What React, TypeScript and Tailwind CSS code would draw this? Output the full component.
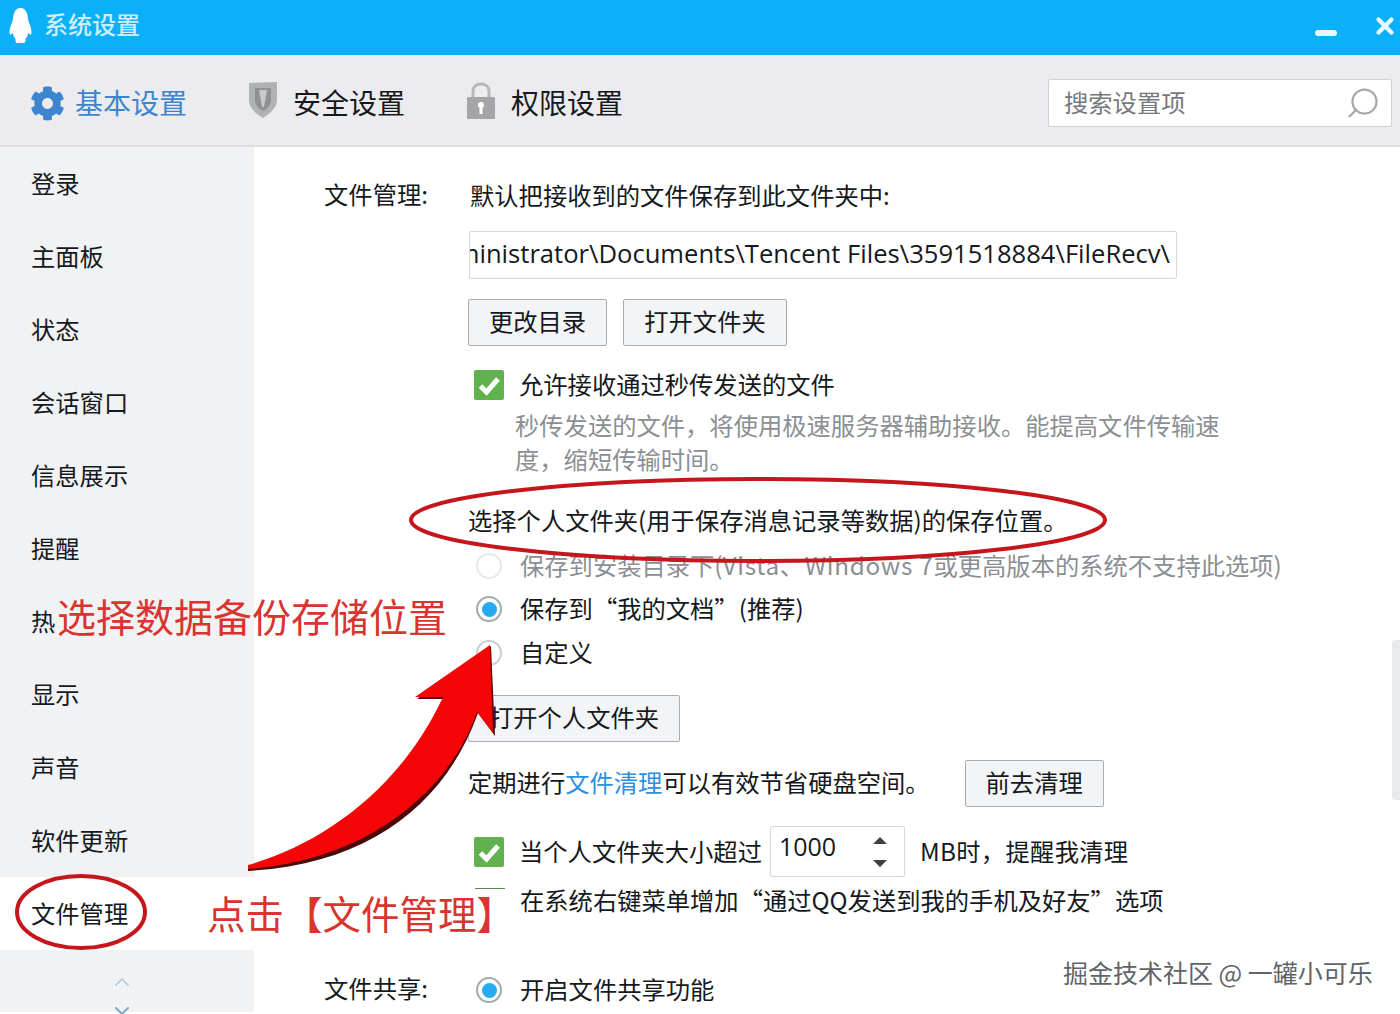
import { FaCog } from "react-icons/fa";
import { Search, ChevronUp, ChevronDown, X } from "lucide-react";

const cjk = { fontFamily: '"Noto Sans CJK SC", "Noto Sans", sans-serif' };

const sideItems = ["登录", "主面板", "状态", "会话窗口", "信息展示", "提醒", "热", "显示", "声音", "软件更新", "文件管理"];

function Row({ label, className, children }: { label?: string; className?: string; children: React.ReactNode }) {
  return (
    <div className={`flex items-center ${className ?? ""}`}>
      <div className="w-[174px] mr-[40px] shrink-0 text-right mb-[4px]">{label}</div>
      {children}
    </div>
  );
}

function Btn({ className, children }: { className?: string; children: React.ReactNode }) {
  return (
    <div className={`h-[47px] flex items-center justify-center pb-[4px] border border-[#a9adb1] rounded-[2px] bg-[#f3f4f5] ${className ?? ""}`}>
      {children}
    </div>
  );
}

function Check() {
  return (
    <div className="w-[30px] h-[30px] ml-[6px] mr-[15px] rounded-[2px] bg-[#62b14f] flex items-center justify-center shrink-0">
      <svg width="24" height="24" viewBox="0 0 24 24" fill="none">
        <path d="M3.500 13l6 6L21 6" stroke="#fff" strokeWidth="5" />
      </svg>
    </div>
  );
}

function Radio({ on, faint }: { on?: boolean; faint?: boolean }) {
  return (
    <div
      className={`w-[26px] h-[26px] ml-[8px] mr-[18px] rounded-full border-2 flex items-center justify-center shrink-0 bg-white ${
        on ? "border-[#9fa9b0]" : faint ? "border-[#e6e8ea]" : "border-[#c9ced2]"
      }`}
    >
      {on && <div className="w-[15px] h-[15px] rounded-full bg-[#27aaf0]" />}
    </div>
  );
}

export default function App() {
  return (
    <div className="relative w-[1400px] h-[1014px] overflow-hidden bg-white text-[24.300px] leading-[34px] text-[#15191d]" style={cjk}>
      {/* title bar */}
      <div className="h-[55px] bg-[#0bb0f8] flex items-center pl-[8px] pr-[2px]">
        <svg width="25" height="36" viewBox="0 0 26 40" className="mt-[-5px]">
          <path d="M13 1C6 1 5 9 4.500 14 3.500 19 0 24 1 30c.5 2 2.500 0 3.500-1 .5 3 1.500 5 3 6.500C7 37 8 40 9 40h8c1 0 2-3 1.500-4.500 1.500-1.500 2.500-3.500 3-6.500 1 1 3 3 3.500 1 1-6-2.500-11-3.500-16C21 9 20 1 13 1z" fill="#fff" />
        </svg>
        <span className="ml-[11px] mb-[7px] text-[24px] font-medium text-[#cdeefc]">系统设置</span>
        <div className="ml-auto flex items-center gap-[35px]">
          <div className="w-[22px] h-[6px] mt-[11px] rounded-full bg-[#e8f8ff]" />
          <X size={26} strokeWidth={4} color="#e8f8ff" className="mb-[3px]" />
        </div>
      </div>

      {/* tabs */}
      <div className="h-[92px] bg-[#ececee] border-b-2 border-[#dcdee0] flex items-center pl-[30px] pr-[8px] pt-[6px]">
        <FaCog size={35} color="#3d85cf" />
        <span className="ml-[10px] mr-[60px] mb-[2px] text-[28px] text-[#3d85cf]">基本设置</span>
        <svg width="32" height="38" viewBox="0 0 32 38" className="mt-[-6px]">
          <path d="M2 2l28-1v18c0 8-8 14-14 18C9 33 2 27 2 19z" fill="#b0b3b5" />
          <path d="M8 7h16v12c0 5-4 9-8 11-4-2-8-6-8-11z" fill="#8e9294" />
          <path d="M12 9h8l-3 17h-2z" fill="#c8cacc" />
        </svg>
        <span className="ml-[14px] mr-[60px] mb-[2px] text-[28px]">安全设置</span>
        <svg width="32" height="38" viewBox="0 0 32 38" className="mt-[-4px]">
          <path d="M8 16V9c0-4 3-7 8-7s8 3 8 7v7" fill="none" stroke="#b5b7b9" strokeWidth="3" />
          <rect x="2" y="15" width="28" height="22" rx="1" fill="#a3a5a7" />
          <circle cx="16" cy="23" r="3" fill="#fff" />
          <rect x="14.500" y="24" width="3" height="8" fill="#fff" />
        </svg>
        <span className="ml-[14px] mb-[2px] text-[28px]">权限设置</span>
        <div className="ml-auto w-[344px] h-[48px] bg-white border border-[#cfd1d3] rounded-[2px] flex items-center pl-[15px] pr-[10px] text-[#75797d]">
          <span className="mb-[2px]">搜索设置项</span>
          <Search size={36} strokeWidth={1.500} color="#a5a8aa" className="ml-auto -scale-x-100" />
        </div>
      </div>

      <div className="flex h-[865px]">
        {/* sidebar */}
        <div className="w-[254px] shrink-0 bg-[#f1f2f4] flex flex-col">
          {sideItems.map((item, i) => (
            <div key={item} className={`h-[73px] shrink-0 flex items-center pl-[31px] pb-[2px] ${i === 10 ? "bg-white" : ""}`}>
              {item}
            </div>
          ))}
          <div className="flex flex-col items-center pr-[10px] pt-[20px]">
            <ChevronUp size={24} strokeWidth={1.500} color="#a9c6d8" />
            <ChevronDown size={24} strokeWidth={2} color="#7fa9c6" className="mt-[5px]" />
          </div>
        </div>

        {/* settings */}
        <div className="flex-1 flex flex-col">
          <Row label="文件管理:" className="h-[34px] mt-[32px]">
            <span className="ml-[2px] mb-[2px]">默认把接收到的文件保存到此文件夹中:</span>
          </Row>
          <Row className="h-[48px] mt-[18px]">
            <div className="w-[708px] h-[48px] ml-[1px] border border-[#d5d7d9] rounded-[2px] overflow-hidden flex items-center justify-end pr-[6px] whitespace-nowrap" style={{ fontFamily: '"Open Sans", sans-serif' }}>
              <span className="text-[25.600px] mb-[2px]">Administrator\Documents\Tencent Files\3591518884\FileRecv\</span>
            </div>
          </Row>
          <Row className="mt-[20px]">
            <Btn className="w-[139px]">更改目录</Btn>
            <Btn className="w-[164px] ml-[16px]">打开文件夹</Btn>
          </Row>
          <Row className="h-[34px] mt-[22px]">
            <Check />
            <span className="mb-[2px]">允许接收通过秒传发送的文件</span>
          </Row>
          <Row className="mt-[6px] !items-start">
            <p className="w-[712px] ml-[47px] text-[#8b8f93]">秒传发送的文件，将使用极速服务器辅助接收。能提高文件传输速度，缩短传输时间。</p>
          </Row>
          <Row className="h-[34px] mt-[28px]">
            <span className="mb-[2px]">选择个人文件夹(用于保存消息记录等数据)的保存位置。</span>
          </Row>
          <Row className="h-[34px] mt-[11px]">
            <Radio faint />
            <span className="text-[#8b8f93] whitespace-nowrap mb-[2px]">
              保存到安装目录下(<span className="tracking-[0.700px]">Vista、Windows 7</span>或更高版本的系统不支持此选项)
            </span>
          </Row>
          <Row className="h-[34px] mt-[9px]">
            <Radio on />
            <span className="mb-[2px]">保存到“我的文档”(推荐)</span>
          </Row>
          <Row className="h-[34px] mt-[10px]">
            <Radio />
            <span className="mb-[2px]">自定义</span>
          </Row>
          <Row className="mt-[25px]">
            <Btn className="w-[212px]">打开个人文件夹</Btn>
          </Row>
          <Row className="h-[47px] mt-[18px]">
            <span className="mb-[4px]">定期进行<span className="text-[#2f8fe0]">文件清理</span>可以有效节省硬盘空间。</span>
            <Btn className="w-[139px] ml-[35px]">前去清理</Btn>
          </Row>
          <Row className="h-[51px] mt-[19px]">
            <Check />
            <span className="whitespace-nowrap mb-[2px]">当个人文件夹大小超过</span>
            <div className="w-[135px] h-[51px] ml-[8px] mr-[15px] border border-[#d5d7d9] rounded-[2px] flex items-center justify-between pl-[8px] pr-[16px] pb-[6px]" style={{ fontFamily: '"Open Sans", sans-serif' }}>
              <span className="text-[25px] mb-[5px]">1000</span>
              <svg width="16" height="32" viewBox="0 0 16 32" className="mt-[6px]">
                <path d="M8 1l7 7H1z M1 24h14l-7 7z" fill="#3a3f44" />
              </svg>
            </div>
            <span className="whitespace-nowrap mb-[2px] tracking-[0.300px]">MB时，提醒我清理</span>
          </Row>
          <Row className="h-[34px] mt-[7px] relative">
            <div className="absolute left-[221px] top-[4px] w-[30px] h-[1px] bg-[#5a8a50]" />
            <span className="ml-[52px] whitespace-nowrap mb-[2px]">在系统右键菜单增加“通过QQ发送到我的手机及好友”选项</span>
          </Row>
          <Row label="文件共享:" className="h-[34px] mt-[55px]">
            <Radio on />
            <span className="mb-[2px]">开启文件共享功能</span>
          </Row>
        </div>
      </div>

      {/* scrollbar */}
      <div className="absolute right-0 top-[640px] w-[8px] h-[160px] rounded-l-[3px] bg-[#e9eaeb]" />

      {/* annotations */}
      <svg width="1400" height="1014" viewBox="0 0 1400 1014" className="absolute inset-0 pointer-events-none">
        <ellipse cx="758" cy="520" rx="347" ry="41" fill="none" stroke="#c4161c" strokeWidth="4" />
        <ellipse cx="81" cy="912" rx="64" ry="36" fill="none" stroke="#c4161c" strokeWidth="4" />
        <path d="M248 868C330 850 412 792 445 699L417 699 491 646 495 736 478 713C446 802 372 864 248 871Z" fill="#4a0a0a" />
        <path d="M248 865C320 845 400 790 443 697L415 697 490 645 493 733 477 712C450 790 370 860 248 869Z" fill="#f50505" />
      </svg>
      <div className="absolute left-[57px] top-[591px] text-[39px] leading-[48px] text-[#d9342f] whitespace-nowrap">选择数据备份存储位置</div>
      <div className="absolute left-[207px] top-[888px] text-[38.500px] leading-[48px] text-[#d9342f] whitespace-nowrap">点击【文件管理】</div>
      <div className="absolute left-[1063px] top-[955px] text-[25px] leading-[34px] text-[#5f6468] whitespace-nowrap">掘金技术社区 @ 一罐小可乐</div>
    </div>
  );
}
